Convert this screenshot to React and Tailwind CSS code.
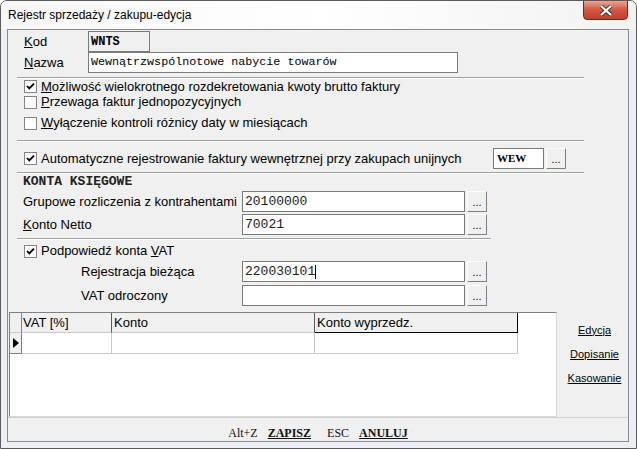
import React from "react";

const ui = { fontFamily: '"Liberation Sans", Arial, sans-serif' };
const mono = { fontFamily: '"Liberation Mono", "Courier New", monospace' };
const serif = { fontFamily: '"Liberation Serif", "Times New Roman", serif' };

const Check = ({ checked }) => (
  <div className="w-[13px] h-[13px] shrink-0 border border-[#858585] bg-white flex items-center justify-center">
    {checked && (
      <svg width="11" height="11" viewBox="0 0 11 11">
        <path d="M2 5 L4.3 7.4 L9 2.6" fill="none" stroke="#000" strokeWidth="1.8" />
      </svg>
    )}
  </div>
);

const Sep = ({ w }) => (
  <div className={`ml-[9px] ${w} border-t border-[#a0a0a0] border-b border-b-white`} />
);

const Dots = () => (
  <div className="w-[20px] h-[21px] ml-[2px] bg-[#f0f0f0] border border-t-white border-l-white border-r-[#808080] border-b-[#808080] flex items-end justify-center pb-[3px] text-[11px] leading-none text-black">
    ...
  </div>
);

const Field = ({ w, value, cursor }) => (
  <div className={`${w} h-[21px] bg-white border border-[#7a7a7a] flex items-center pl-[2px] text-[13px] text-[#222]`} style={mono}>
    {value}
    {cursor && <span className="inline-block w-[1px] h-[14px] bg-black" />}
  </div>
);

export default function App() {
  return (
    <div className="w-[637px] h-[449px] bg-[#eceff3] border border-[#5b5b5b] rounded-t-[7px] overflow-hidden relative" style={ui}>
      {/* title bar */}
      <div className="h-[28px] flex items-center pl-[7px] bg-gradient-to-r from-[#f7f7f7] via-white to-[#f2f2f2]">
        <span className="text-[12px] text-black">Rejestr sprzedaży / zakupu-edycja</span>
      </div>
      <div className="absolute right-[8px] top-[-1px] w-[45px] h-[20px] rounded-b-[4px] border border-[#6e2a1e] bg-gradient-to-b from-[#e8a493] via-[#d2553e] to-[#c0412c] flex items-center justify-center">
        <svg width="14" height="11" viewBox="0 0 14 11">
          <path d="M2 1 L12 10 M12 1 L2 10" stroke="#3a3a3a" strokeWidth="4" />
          <path d="M2 1 L12 10 M12 1 L2 10" stroke="#fff" strokeWidth="2.2" />
        </svg>
      </div>

      {/* client */}
      <div className="ml-[6px] w-[622px] h-[413px] border border-[#8a8a8a] bg-[#f0f0f0] text-[13px] text-black flex flex-col">
        <div className="flex items-center h-[21px] mt-[1px]">
          <div className="w-[64px] ml-[16px]"><u>K</u>od</div>
          <div className="w-[62px] h-[21px] bg-[#f0f0f0] border border-[#7a7a7a] flex items-center pl-[2px] text-[12px] font-bold" style={mono}>WNTS</div>
        </div>
        <div className="flex items-center h-[21px]">
          <div className="w-[64px] ml-[16px]"><u>N</u>azwa</div>
          <div className="w-[370px] h-[21px] bg-white border border-[#7a7a7a] flex items-center pl-[2px] text-[11.7px]" style={mono}>Wewnątrzwspólnotowe nabycie towarów</div>
        </div>

        <div className="mt-[4px]"><Sep w="w-[567px]" /></div>

        <div className="flex items-center h-[15px] pl-[16px] gap-[4px]">
          <Check checked />
          <span><u>M</u>ożliwość wielokrotnego rozdekretowania kwoty brutto faktury</span>
        </div>
        <div className="flex items-center h-[16px] pl-[16px] gap-[4px]">
          <Check />
          <span><u>P</u>rzewaga faktur jednopozycyjnych</span>
        </div>
        <div className="flex items-center h-[16px] mt-[5px] pl-[16px] gap-[4px]">
          <Check />
          <span><u>W</u>yłączenie kontroli różnicy daty w miesiącach</span>
        </div>

        <div className="mt-[9px]"><Sep w="w-[567px]" /></div>

        <div className="flex items-center h-[21px] mt-[6px] pl-[16px]">
          <Check checked />
          <span className="ml-[4px] w-[452px]">Automatyczne rejestrowanie faktury wewnętrznej przy zakupach unijnych</span>
          <div className="w-[51px] h-[21px] bg-white border border-[#7a7a7a] flex items-center pl-[3px] text-[11px] font-bold" style={serif}>WEW</div>
          <Dots />
        </div>

        <div className="mt-[3px]"><Sep w="w-[567px]" /></div>

        <div className="h-[14px] mt-[1px] pl-[15px] flex items-center text-[13px] font-bold text-[#222]" style={mono}>KONTA KSIĘGOWE</div>

        <div className="flex items-center h-[21px] mt-[2px] pl-[15px]">
          <span className="w-[219px]">Grupowe rozliczenia z kontrahentami</span>
          <Field w="w-[223px]" value="20100000" />
          <Dots />
        </div>
        <div className="flex items-center h-[21px] mt-[2px] pl-[15px]">
          <span className="w-[219px]"><u>K</u>onto Netto</span>
          <Field w="w-[223px]" value="70021" />
          <Dots />
        </div>

        <div className="mt-[3px]"><Sep w="w-[474px]" /></div>

        <div className="flex items-center h-[16px] mt-[3px] pl-[16px] gap-[4px]">
          <Check checked />
          <span>Podpowiedź konta <u>V</u>AT</span>
        </div>
        <div className="flex items-center h-[21px] mt-[2px] pl-[73px]">
          <span className="w-[161px]">Rejestracja bieżąca</span>
          <Field w="w-[223px]" value="220030101" cursor />
          <Dots />
        </div>
        <div className="flex items-center h-[21px] mt-[3px] pl-[73px]">
          <span className="w-[161px]">VAT odroczony</span>
          <Field w="w-[223px]" value="" />
          <Dots />
        </div>

        {/* grid + side buttons */}
        <div className="flex mt-[6px] h-[105px]">
          <div className="ml-[1px] w-[548px] h-[105px] bg-white border border-t-[#808080] border-l-[#808080] border-r-[#d8d8d8] border-b-[#d8d8d8] flex flex-col">
            <div className="flex h-[20px] bg-[#f0f0f0]">
              <div className="w-[12px] border-r border-[#808080] border-b border-b-[#c8c8c8]" />
              <div className="w-[90px] border-r border-[#5a5a5a] border-b border-b-[#c8c8c8] pl-[1px] flex items-center">VAT [%]</div>
              <div className="w-[203px] border-r border-[#5a5a5a] border-b border-b-[#c8c8c8] pl-[2px] flex items-center">Konto</div>
              <div className="w-[203px] border-r border-black border-b border-b-black pl-[2px] flex items-center">Konto wyprzedz.</div>
              <div className="flex-1 bg-white" />
            </div>
            <div className="flex h-[21px]">
              <div className="w-[12px] bg-[#f0f0f0] border-r border-[#808080] border-b border-b-[#808080] flex items-center justify-center">
                <svg width="6" height="10" viewBox="0 0 6 10"><path d="M0 0 L6 5 L0 10 Z" fill="#000" /></svg>
              </div>
              <div className="w-[90px] border-r border-b border-[#c8c8c8]" />
              <div className="w-[203px] border-r border-b border-[#c8c8c8]" />
              <div className="w-[203px] border-r border-b border-[#c8c8c8]" />
            </div>
          </div>
          <div className="flex-1 flex flex-col items-center pl-[4px] pt-[6px] text-[11px]">
            <div className="h-[24px] flex items-center underline">Edycja</div>
            <div className="h-[24px] flex items-center underline">Dopisanie</div>
            <div className="h-[24px] flex items-center underline">Kasowanie</div>
          </div>
        </div>

        {/* bottom bar */}
        <div className="flex-1 border-t border-[#d0d0d0] flex items-center justify-center pt-[6px] text-[12px] text-[#111]" style={serif}>
          <span>Alt+Z</span>
          <span className="ml-[10px] font-bold underline">ZAPISZ</span>
          <span className="ml-[16px]">ESC</span>
          <span className="ml-[10px] font-bold underline">ANULUJ</span>
        </div>
      </div>
    </div>
  );
}
